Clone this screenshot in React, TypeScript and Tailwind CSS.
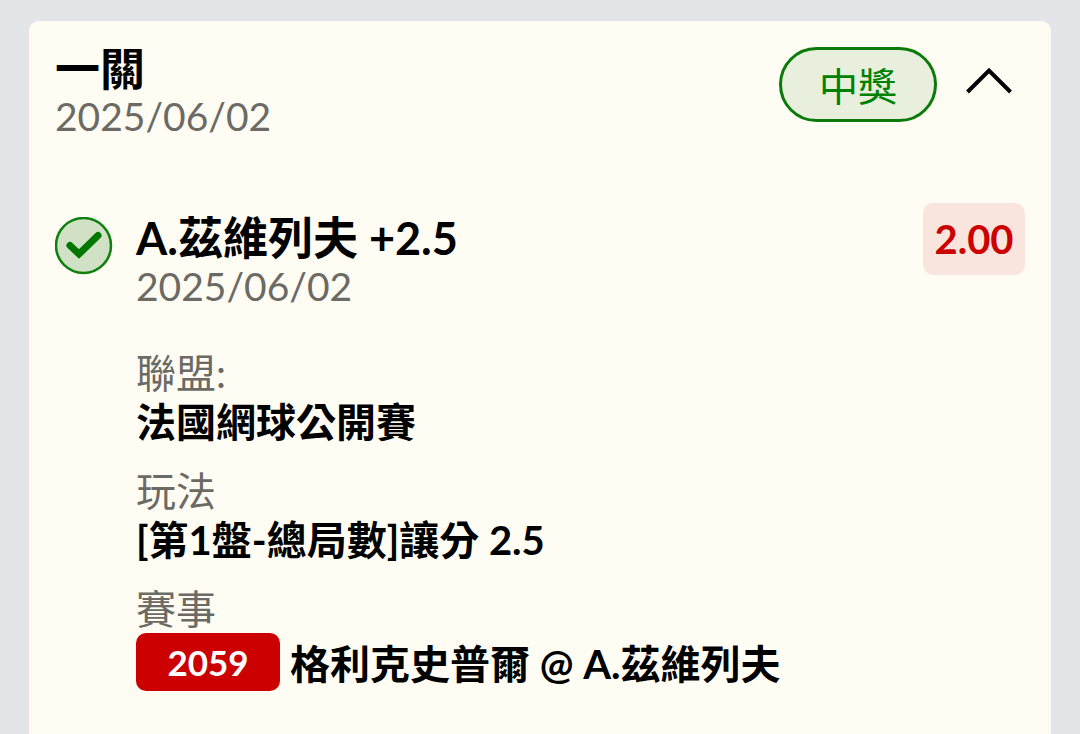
import { useState } from "react";
import type { ReactNode } from "react";

function Detail({ label, children }: { label: string; children: ReactNode }) {
  return (
    <div>
      <dt className="text-[40px] leading-[48px] text-[#6b6a65]">{label}</dt>
      <dd className="text-[40px] leading-[50px] font-bold text-black">{children}</dd>
    </div>
  );
}

export default function App() {
  const [open, setOpen] = useState(true);
  return (
    <main
      lang="zh-Hant"
      className="min-h-screen bg-[#e3e5e8] px-[29px] pt-[21px] font-['Lato','Noto_Sans_CJK_TC',sans-serif]"
    >
      <article className="min-h-[calc(100vh-21px)] rounded-t-[10px] bg-[#fffdf3] px-[26px] pt-6 pb-10">
        <header className="flex items-start justify-between">
          <div>
            <h1 className="text-[45px] leading-[48px] font-bold text-black">一關</h1>
            <p className="text-[39px] leading-[46px] text-[#6b6a65]">2025/06/02</p>
          </div>
          <div className="flex items-center gap-7 pt-[2px] pr-3">
            <span className="flex h-[75px] w-[158px] items-center justify-center rounded-full border-3 border-[#0a7a0a] bg-[#e8efdc] pt-1 text-[39px] text-[#008000]">
              中獎
            </span>
            <button
              type="button"
              className="mb-2"
              aria-label="詳情"
              aria-expanded={open}
              onClick={() => setOpen(!open)}
            >
              <svg viewBox="0 0 48 28" className="h-7 w-12" fill="none" stroke="#000" strokeWidth="4">
                <path d="M2.500 25 24 3.500 45.500 25" />
              </svg>
            </button>
          </div>
        </header>

        {open && (
          <section className="mt-16 flex items-start">
            <svg viewBox="0 0 58 58" className="mt-[14px] size-[58px] shrink-0" aria-hidden="true">
              <circle cx="28.500" cy="28.500" r="27.500" fill="#d1e1c5" stroke="#108010" strokeWidth="2.500" />
              <path
                d="M15 28.500 24 37 43 18.500"
                fill="none"
                stroke="#007800"
                strokeWidth="7"
                strokeLinecap="round"
              />
            </svg>
            <div className="ml-[23px] min-w-0 flex-1">
              <div className="flex items-start justify-between">
                <div className="pt-[10px]">
                  <h2 className="text-[45px] leading-[50px] font-bold text-black">A.茲維列夫 +2.5</h2>
                  <p className="text-[39px] leading-[46px] text-[#6b6a65]">2025/06/02</p>
                </div>
                <span className="flex h-[72px] w-[102px] items-center justify-center rounded-[10px] bg-[#fae5de] text-[40px] font-bold text-[#cc0000]">
                  2.00
                </span>
              </div>
              <dl className="mt-10 flex flex-col gap-5">
                <Detail label="聯盟:">法國網球公開賽</Detail>
                <Detail label="玩法">[第1盤-總局數]讓分 2.5</Detail>
                <Detail label="賽事">
                  <span className="flex items-center gap-[10px]">
                    <span className="flex h-[58px] w-36 items-center justify-center rounded-[10px] bg-[#cc0000] text-[35px] text-white">
                      2059
                    </span>
                    <span className="pt-1">格利克史普爾 @ A.茲維列夫</span>
                  </span>
                </Detail>
              </dl>
            </div>
          </section>
        )}
      </article>
    </main>
  );
}
